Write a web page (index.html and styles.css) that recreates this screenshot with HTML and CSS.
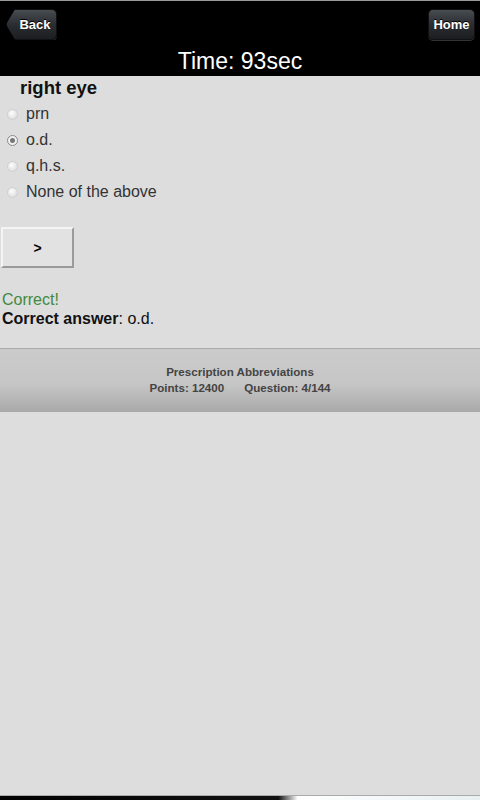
FILE: index.html
```html
<!DOCTYPE html>
<html lang="en">
<head>
    <meta charset="UTF-8" />
    <meta name="viewport" content="width=device-width, initial-scale=1" />
    <title>Quiz</title>
    <link rel="stylesheet" href="styles.css">
</head>
<body>
<div class="page">
    <div class="header">
        <div class="header-bar">
            <a class="btn back-btn" href="#">Back</a>
            <a class="btn home-btn" href="#">Home</a>
        </div>
        <h1 class="timer">Time: 93sec</h1>
    </div>

    <div class="content">
        <h2 class="question">right eye</h2>
        <ul class="options">
            <li><span class="radio"></span>prn</li>
            <li><span class="radio checked"></span>o.d.</li>
            <li><span class="radio"></span>q.h.s.</li>
            <li><span class="radio"></span>None of the above</li>
        </ul>

        <button class="next-btn">&gt;</button>

        <p class="feedback">Correct!</p>
        <p class="answer"><strong>Correct answer</strong>: o.d.</p>
    </div>

    <div class="footer">
        <div>Prescription Abbreviations</div>
        <div>Points: 12400<span class="gap"></span>Question: 4/144</div>
    </div>

    <div class="bottom-strip"></div>
</div>
</body>
</html>
```

FILE: styles.css
```css
html, body {
    margin: 0;
    padding: 0;
}
body {
    font-family: "Liberation Sans", Arial, sans-serif;
    background: #dddddd;
    color: #222;
}
.page {
    min-height: 100vh;
    display: flex;
    flex-direction: column;
}
.header {
    background: #000;
    border-top: 1px solid #999;
    height: 75px;
}
.header-bar {
    display: flex;
    justify-content: space-between;
    padding: 8px 5px 0 6px;
}
.btn {
    display: flex;
    align-items: center;
    justify-content: center;
    height: 31px;
    box-sizing: border-box;
    color: #fff;
    font-weight: bold;
    font-size: 13px;
    text-decoration: none;
    background: linear-gradient(to bottom, #484d52, #2a2d31 50%, #1c1e21);
    border: 1px solid #111;
    border-radius: 5px;
    box-shadow: 0 1px 0 #333;
    text-shadow: 0 -1px 0 #000;
}
.back-btn {
    width: 51px;
    padding-left: 7px;
    clip-path: polygon(0 50%, 18% 0, 100% 0, 100% 100%, 18% 100%);
}
.home-btn {
    width: 47px;
}
.timer {
    margin: 7px 0 0 0;
    text-align: center;
    color: #fff;
    font-weight: normal;
    font-size: 23px;
    line-height: 28px;
}
.content {
    padding: 0 0 0 2px;
}
.question {
    margin: 0;
    padding: 1px 0 0 18px;
    font-size: 18.5px;
    line-height: 22px;
    font-weight: bold;
    color: #111;
}
.options {
    list-style: none;
    margin: 0;
    padding: 2px 0 0 0;
}
.options li {
    display: flex;
    align-items: center;
    height: 26px;
    font-size: 16px;
    color: #333;
}
.radio {
    width: 11px;
    height: 11px;
    margin: 0 8px 0 5px;
    border-radius: 50%;
    background: radial-gradient(circle at 40% 35%, #fdfdfd, #d6d6d6);
    border: 1px solid #cfcfcf;
    box-sizing: border-box;
}
.radio.checked {
    border-color: #8a8a8a;
    background: radial-gradient(circle, #777 0 2px, #f0f0f0 3px);
}
.next-btn {
    display: block;
    margin: 22px 0 0 -1px;
    width: 73px;
    height: 41px;
    background: #e2e2e2;
    border: 2px solid;
    border-color: #f4f4f4 #9a9a9a #9a9a9a #f4f4f4;
    font-family: "Liberation Sans", Arial, sans-serif;
    font-weight: bold;
    font-size: 14px;
    color: #000;
}
.feedback {
    margin: 22px 0 0 0;
    font-size: 16px;
    line-height: 19px;
    color: #3f8a3f;
}
.answer {
    margin: 0;
    font-size: 16px;
    line-height: 19px;
    color: #111;
}
.footer {
    margin-top: 20px;
    height: 64px;
    box-sizing: border-box;
    padding-top: 15px;
    border-top: 1px solid #aaa;
    background: linear-gradient(to bottom, #cbcbcb 0, #c6c6c6 55%, #a9a9a9 100%);
    text-align: center;
    font-size: 11.6px;
    line-height: 16px;
    color: #444;
    font-weight: bold;
}
.gap {
    display: inline-block;
    width: 20px;
}
.bottom-strip {
    margin-top: auto;
    height: 4px;
    background: linear-gradient(to right, #000 0, #111 58%, #fff 62%, #e8f0f2 100%);
    border-top: 1px solid #aaa;
}
```
